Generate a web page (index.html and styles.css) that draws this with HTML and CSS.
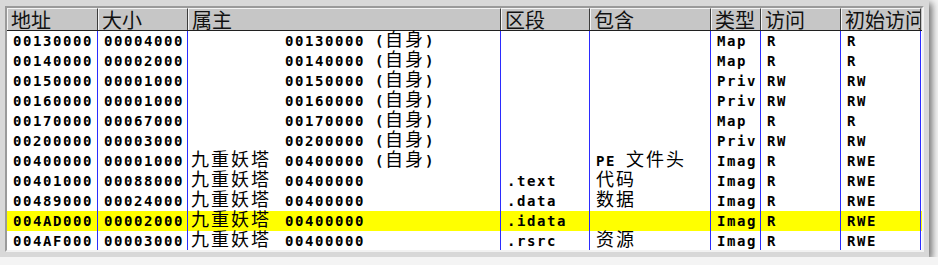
FILE: index.html
```html
<!DOCTYPE html>
<html lang="zh">
<head>
<meta charset="utf-8">
<title>内存映射</title>
<link rel="stylesheet" href="styles.css">
</head>
<body>
<div class="window">
  <div class="frame">
    <div class="table">
      <div class="row head">
        <div class="hcell">地址</div>
        <div class="hcell">大小</div>
        <div class="hcell">属主</div>
        <div class="hcell">区段</div>
        <div class="hcell">包含</div>
        <div class="hcell">类型</div>
        <div class="hcell">访问</div>
        <div class="hcell">初始访问</div>
      </div>
      <div class="body">
        <div class="row">
          <div class="cell">00130000</div><div class="cell">00004000</div>
          <div class="cell owner"><span class="oname"></span>00130000 (<span class="cjk">自身</span>)</div>
          <div class="cell"></div><div class="cell"></div>
          <div class="cell">Map</div><div class="cell">R</div><div class="cell">R</div>
        </div>
        <div class="row">
          <div class="cell">00140000</div><div class="cell">00002000</div>
          <div class="cell owner"><span class="oname"></span>00140000 (<span class="cjk">自身</span>)</div>
          <div class="cell"></div><div class="cell"></div>
          <div class="cell">Map</div><div class="cell">R</div><div class="cell">R</div>
        </div>
        <div class="row">
          <div class="cell">00150000</div><div class="cell">00001000</div>
          <div class="cell owner"><span class="oname"></span>00150000 (<span class="cjk">自身</span>)</div>
          <div class="cell"></div><div class="cell"></div>
          <div class="cell">Priv</div><div class="cell">RW</div><div class="cell">RW</div>
        </div>
        <div class="row">
          <div class="cell">00160000</div><div class="cell">00001000</div>
          <div class="cell owner"><span class="oname"></span>00160000 (<span class="cjk">自身</span>)</div>
          <div class="cell"></div><div class="cell"></div>
          <div class="cell">Priv</div><div class="cell">RW</div><div class="cell">RW</div>
        </div>
        <div class="row">
          <div class="cell">00170000</div><div class="cell">00067000</div>
          <div class="cell owner"><span class="oname"></span>00170000 (<span class="cjk">自身</span>)</div>
          <div class="cell"></div><div class="cell"></div>
          <div class="cell">Map</div><div class="cell">R</div><div class="cell">R</div>
        </div>
        <div class="row">
          <div class="cell">00200000</div><div class="cell">00003000</div>
          <div class="cell owner"><span class="oname"></span>00200000 (<span class="cjk">自身</span>)</div>
          <div class="cell"></div><div class="cell"></div>
          <div class="cell">Priv</div><div class="cell">RW</div><div class="cell">RW</div>
        </div>
        <div class="row">
          <div class="cell">00400000</div><div class="cell">00001000</div>
          <div class="cell owner"><span class="oname cjk">九重妖塔</span>00400000 (<span class="cjk">自身</span>)</div>
          <div class="cell"></div><div class="cell">PE <span class="cjk">文件头</span></div>
          <div class="cell">Imag</div><div class="cell">R</div><div class="cell">RWE</div>
        </div>
        <div class="row">
          <div class="cell">00401000</div><div class="cell">00088000</div>
          <div class="cell owner"><span class="oname cjk">九重妖塔</span>00400000</div>
          <div class="cell">.text</div><div class="cell"><span class="cjk">代码</span></div>
          <div class="cell">Imag</div><div class="cell">R</div><div class="cell">RWE</div>
        </div>
        <div class="row">
          <div class="cell">00489000</div><div class="cell">00024000</div>
          <div class="cell owner"><span class="oname cjk">九重妖塔</span>00400000</div>
          <div class="cell">.data</div><div class="cell"><span class="cjk">数据</span></div>
          <div class="cell">Imag</div><div class="cell">R</div><div class="cell">RWE</div>
        </div>
        <div class="row selected">
          <div class="cell">004AD000</div><div class="cell">00002000</div>
          <div class="cell owner"><span class="oname cjk">九重妖塔</span>00400000</div>
          <div class="cell">.idata</div><div class="cell"></div>
          <div class="cell">Imag</div><div class="cell">R</div><div class="cell">RWE</div>
        </div>
        <div class="row">
          <div class="cell">004AF000</div><div class="cell">00003000</div>
          <div class="cell owner"><span class="oname cjk">九重妖塔</span>00400000</div>
          <div class="cell">.rsrc</div><div class="cell"><span class="cjk">资源</span></div>
          <div class="cell">Imag</div><div class="cell">R</div><div class="cell">RWE</div>
        </div>
      </div>
    </div>
  </div>
</div>
</body>
</html>
```

FILE: styles.css
```css
html, body {
  margin: 0;
  padding: 0;
  background: #f4f4f4;
}

.window {
  width: 929px;
  height: 257px;
  box-sizing: border-box;
  padding: 6px 5px 5px 5px;
  background: #d8d8d8;
  box-shadow: 3px 3px 7px rgba(0, 0, 0, 0.55);
}

.frame {
  height: 100%;
  box-sizing: border-box;
  border: 2px solid;
  border-color: #9a9a9a #f2f2f2 #f2f2f2 #9a9a9a;
}

.table {
  height: 100%;
  background: #ffffff;
  overflow: hidden;
}

.row {
  display: grid;
  grid-template-columns: 91px 90px 313px 89px 121px 50px 80px 80px;
  height: 20px;
}

.row.head {
  height: 23px;
  box-sizing: border-box;
  border-bottom: 1px solid #202020;
  background: #c6c6c6;
}

.hcell {
  box-sizing: border-box;
  border-top: 1px solid #f4f4f4;
  border-left: 1px solid #f4f4f4;
  border-right: 1px solid #3c3c3c;
  padding-left: 3px;
  font-family: "Noto Sans CJK SC", sans-serif;
  font-size: 20px;
  line-height: 21px;
  color: #111;
  white-space: nowrap;
  overflow: hidden;
}

.cell {
  box-sizing: border-box;
  border-right: 1px solid #2b2bff;
  padding-left: 6px;
  padding-top: 1px;
  font-family: "DejaVu Sans Mono", monospace;
  font-weight: bold;
  font-size: 14px;
  letter-spacing: 1.57px;
  line-height: 19px;
  color: #000;
  white-space: nowrap;
  overflow: visible;
}

.cell.owner {
  padding-left: 3px;
}

.oname {
  display: inline-block;
  width: 94px;
}

.cjk {
  font-family: "Noto Sans CJK SC", sans-serif;
  font-weight: normal;
  font-size: 18px;
  letter-spacing: 2px;
  line-height: 2px;
}

.row.selected {
  background: #ffff00;
}
```
